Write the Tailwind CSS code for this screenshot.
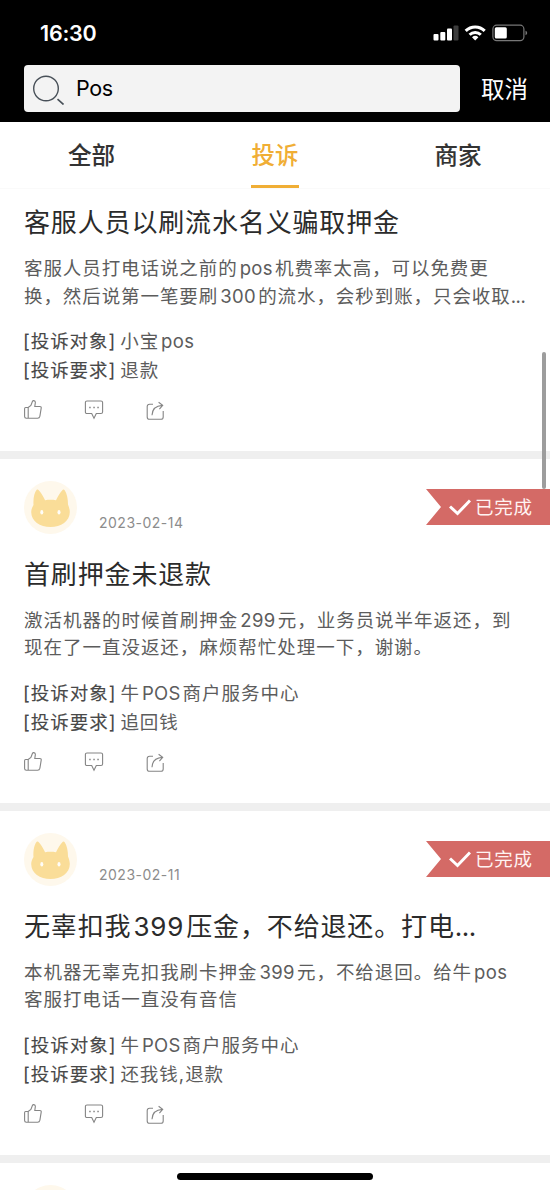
<!DOCTYPE html>
<html lang="zh-CN">
<head>
<meta charset="utf-8">
<title>投诉</title>
<script src="https://cdn.jsdelivr.net/npm/@tailwindcss/browser@4"></script>
</head>
<body class="bg-white">
<svg class="hidden">
  <symbol id="like" viewBox="0 0 18 20"><path d="M1.6 7.500h2.600l2.700-2.100 1.500-3.900c.3-.7.8-1 1.400-.9 1.200.2 1.700 1.100 1.500 2.300L10.800 6.500h5c1 0 1.600.7 1.400 1.700l-1.300 8c-.3 1.500-.9 2.100-2.300 2.100H2.300C1.200 18.300.6 17.700.6 16.600V8.700c0-.7.4-1.200 1-1.200zM4.200 7.500v10.800"/></symbol>
  <symbol id="chat" viewBox="0 0 20 20"><path d="M3 1h14c1 0 1.600.6 1.600 1.600v9.300c0 1-.6 1.600-1.600 1.600h-4.700L10 18.300l-2.300-4.800H3c-1 0-1.600-.6-1.600-1.600V2.600C1.400 1.600 2 1 3 1z"/><path stroke-width="1.700" d="M5.200 7.500h1.500M9.300 7.500h1.500M13.300 7.500h1.500"/></symbol>
  <symbol id="share" viewBox="0 0 20 20"><path d="M7 3.200H3.600C2 3.200 1.200 4 1.200 5.600v10.300c0 1.600.8 2.400 2.400 2.400h11.200c1.600 0 2.400-.8 2.400-2.400V10M6 14.300C6.200 8.500 9.500 4.800 16.500 4.400M12.600 1.300l4.100 3.100-3.300 3.700"/></symbol>
  <symbol id="cat" viewBox="0 0 53 53"><circle cx="26.500" cy="26.500" r="26.500" fill="#fef8ec"/><path fill="#fadd98" d="M9.500 24C9 17 10.500 11.500 12.500 9c.8-.8 1.700-.5 2.500.4 2.600 2.900 4.500 6.200 6.100 9.800 3.600-.6 7.300-.6 10.900 0 1.600-3.600 3.500-6.900 6.100-9.800.8-.9 1.800-1.100 2.600-.2 2.200 3.500 3.300 8.300 3.300 14.300 1 2.400 1.800 5 1.800 7.600C45.800 40.500 37 46 26.500 46S7.200 40.500 7.200 31.100c0-2.500.9-4.900 2.300-7.100z"/><ellipse cx="17.800" cy="31.300" rx="1.500" ry="2.300" fill="#fffdf8"/><ellipse cx="35" cy="31.300" rx="1.500" ry="2.300" fill="#fffdf8"/></symbol>
</svg>

<div class="relative w-[550px] h-[1190px] overflow-hidden bg-white font-['Inter','Noto_Sans_CJK_SC',sans-serif] whitespace-nowrap">
  <header class="h-[122px] bg-black text-white">
    <div class="h-[65px] flex items-center justify-between pl-[40px] pr-[22px]">
      <span class="text-[21.500px] font-semibold tracking-[-0.2px] leading-[30px]">16:30</span>
      <svg class="w-[96px] h-[20px]" viewBox="432 23 96 20">
        <g fill="#fff"><rect x="433.500" y="34" width="5" height="6.500" rx="1"/><rect x="440.300" y="32" width="5" height="8.500" rx="1"/><rect x="447" y="28.500" width="5" height="12" rx="1"/><rect x="453.500" y="25.500" width="5" height="15" rx="1" fill="#3c3c3c"/>
        <rect x="494.800" y="27.300" width="12" height="11.200" rx="1.500"/></g>
        <g fill="none" stroke="#fff" stroke-width="3"><path d="M465.700 30.900a13.400 13.400 0 0 1 19 0"/><path d="M469.600 34.800a8 8 0 0 1 11.200 0"/></g>
        <path fill="#fff" d="M475.200 40.600l-3.200-3.300a4.800 4.800 0 0 1 6.400 0z"/>
        <rect x="492.900" y="25.200" width="31" height="15.400" rx="3.800" fill="none" stroke="#777" stroke-width="1.200"/>
        <path fill="#777" d="M525.500 30.800c2.200.7 2.200 3.700 0 4.400z"/>
      </svg>
    </div>
    <div class="flex items-center pl-[24px]">
      <div class="flex h-[47px] w-[436px] items-center rounded-[4px] bg-[#f3f3f3] pl-[8px]">
        <svg class="h-[32px] w-[32px]" viewBox="0 0 32 32" fill="none" stroke="#485058" stroke-width="1.400"><circle cx="14" cy="15.500" r="12.300"/><path stroke-width="1.600" d="M25.500 26.200l6 5.300"/></svg>
        <span class="ml-[12px] mb-[2px] text-[21.500px] leading-[30px] tracking-[-0.4px] text-black">Pos</span>
      </div>
      <span class="ml-[21px] mt-[2px] text-[23.500px] leading-[34px]">取消</span>
    </div>
  </header>

  <nav class="flex h-[67px] border-b border-[#fafafa] text-[23.500px] leading-[34px] font-medium text-[#333]">
    <div class="flex w-[183px] flex-col items-center pt-[17px] [-webkit-text-stroke:0.1px]">全部</div>
    <div class="flex w-[184px] flex-col items-center pt-[17px] text-[#f0ae35]">投诉<span class="mt-[12px] h-[3px] w-[48px] bg-[#f0ae35]"></span></div>
    <div class="flex w-[182px] flex-col items-center pt-[17px] [-webkit-text-stroke:0.1px]">商家</div>
  </nav>

  <main>
    <article class="h-[270px] border-b-8 border-[#efefef] px-[24px] pt-[16px]">
      <h2 class="text-[26px] leading-[36px] tracking-[0.850px] text-[#2b2b2b]">客服人员以刷流水名义骗取押金</h2>
      <div class="mt-[14px] text-[18.500px] leading-[27.500px] tracking-[0.920px] text-[#5c5c5c]">
        <p>客服人员打电话说之前的<span class="mx-[2px] tracking-[0.4px]">pos</span>机费率太高，可以免费更</p>
        <p>换，然后说第一笔要刷<span class="mx-[2px] tracking-[0.4px]">300</span>的流水，会秒到账，只会收取<span class="tracking-[-0.4px]">...</span></p>
      </div>
      <div class="mt-[17px] text-[18.500px] leading-[28.500px] tracking-[0.950px] text-[#5c5c5c]">
        <p><span class="-ml-px mr-[4px] text-[#484848] [-webkit-text-stroke:0.1px]">[投诉对象]</span>小宝<span class="ml-[2px] tracking-[0.4px]">pos</span></p>
        <p><span class="-ml-px mr-[4px] text-[#484848] [-webkit-text-stroke:0.1px]">[投诉要求]</span>退款</p>
      </div>
      <div class="mt-[16px] flex fill-none stroke-[#858585] stroke-[1.1]">
        <svg class="h-[20px] w-[18px]"><use href="#like"/></svg>
        <svg class="ml-[42px] h-[20px] w-[20px]"><use href="#chat"/></svg>
        <svg class="ml-[42px] mt-px h-[20px] w-[20px]"><use href="#share"/></svg>
      </div>
    </article>

    <article class="h-[352px] border-b-8 border-[#efefef] pl-[24px] pt-[22px]">
      <div class="flex h-[53px]">
        <svg class="h-[53px] w-[53px]"><use href="#cat"/></svg>
        <time class="ml-[22px] mt-[32px] text-[14px] leading-[20px] tracking-[0.500px] text-[#8c8c8c]">2023-02-14</time>
        <div class="ml-auto mt-[8px] flex h-[36px] w-[124px] items-center bg-[#d46a66] pl-[23px] text-[18.500px] tracking-[0.800px] text-[#fff3f2] [clip-path:polygon(0_0,100%_0,100%_100%,0_100%,15px_50%)]">
          <svg class="mr-[4px] h-[18px] w-[22px]" viewBox="0 0 22 18" fill="none" stroke="#fff" stroke-width="3"><path d="M1 8.500l7.500 7L21 2.500"/></svg><span class="mt-px">已完成</span>
        </div>
      </div>
      <h2 class="mt-[23px] text-[26px] leading-[36px] tracking-[0.850px] text-[#2b2b2b]">首刷押金未退款</h2>
      <div class="mt-[14px] text-[18.500px] leading-[27px] tracking-[0.980px] text-[#5c5c5c]">
        <p>激活机器的时候首刷押金<span class="mx-[2px] tracking-[0.4px]">299</span>元，业务员说半年返还，到</p>
        <p>现在了一直没返还，麻烦帮忙处理一下，谢谢。</p>
      </div>
      <div class="mt-[18px] text-[18.500px] leading-[28.500px] tracking-[0.980px] text-[#5c5c5c]">
        <p><span class="-ml-px mr-[4px] text-[#484848] [-webkit-text-stroke:0.1px]">[投诉对象]</span>牛<span class="mx-[2px] tracking-[0.3px]">POS</span>商户服务中心</p>
        <p><span class="-ml-px mr-[4px] text-[#484848] [-webkit-text-stroke:0.1px]">[投诉要求]</span>追回钱</p>
      </div>
      <div class="mt-[16px] flex fill-none stroke-[#858585] stroke-[1.1]">
        <svg class="h-[20px] w-[18px]"><use href="#like"/></svg>
        <svg class="ml-[42px] h-[20px] w-[20px]"><use href="#chat"/></svg>
        <svg class="ml-[42px] mt-px h-[20px] w-[20px]"><use href="#share"/></svg>
      </div>
    </article>

    <article class="h-[352px] border-b-8 border-[#efefef] pl-[24px] pt-[22px]">
      <div class="flex h-[53px]">
        <svg class="h-[53px] w-[53px]"><use href="#cat"/></svg>
        <time class="ml-[22px] mt-[32px] text-[14px] leading-[20px] tracking-[0.500px] text-[#8c8c8c]">2023-02-11</time>
        <div class="ml-auto mt-[8px] flex h-[36px] w-[124px] items-center bg-[#d46a66] pl-[23px] text-[18.500px] tracking-[0.800px] text-[#fff3f2] [clip-path:polygon(0_0,100%_0,100%_100%,0_100%,15px_50%)]">
          <svg class="mr-[4px] h-[18px] w-[22px]" viewBox="0 0 22 18" fill="none" stroke="#fff" stroke-width="3"><path d="M1 8.500l7.500 7L21 2.500"/></svg><span class="mt-px">已完成</span>
        </div>
      </div>
      <h2 class="mt-[23px] text-[26px] leading-[36px] tracking-[0.850px] text-[#2b2b2b]">无辜扣我<span class="mx-[2px]">399</span>压金，不给退还。打电<span class="tracking-[-0.5px]">...</span></h2>
      <div class="mt-[14px] text-[18.500px] leading-[27px] tracking-[0.950px] text-[#5c5c5c]">
        <p>本机器无辜克扣我刷卡押金<span class="mx-[2px] tracking-[0.4px]">399</span>元，不给退回。给牛<span class="ml-[2px] tracking-[0.4px]">pos</span></p>
        <p>客服打电话一直没有音信</p>
      </div>
      <div class="mt-[18px] text-[18.500px] leading-[28.500px] tracking-[0.980px] text-[#5c5c5c]">
        <p><span class="-ml-px mr-[4px] text-[#484848] [-webkit-text-stroke:0.1px]">[投诉对象]</span>牛<span class="mx-[2px] tracking-[0.3px]">POS</span>商户服务中心</p>
        <p><span class="-ml-px mr-[4px] text-[#484848] [-webkit-text-stroke:0.1px]">[投诉要求]</span>还我钱,退款</p>
      </div>
      <div class="mt-[16px] flex fill-none stroke-[#858585] stroke-[1.1]">
        <svg class="h-[20px] w-[18px]"><use href="#like"/></svg>
        <svg class="ml-[42px] h-[20px] w-[20px]"><use href="#chat"/></svg>
        <svg class="ml-[42px] mt-px h-[20px] w-[20px]"><use href="#share"/></svg>
      </div>
    </article>

    <article class="pl-[24px] pt-[22px]">
      <svg class="h-[53px] w-[53px]"><use href="#cat"/></svg>
    </article>
  </main>

  <div class="absolute left-[542px] top-[352px] h-[137px] w-[4px] rounded-full bg-[#9d9d9d]"></div>
  <div class="absolute left-[177px] top-[1173px] h-[7px] w-[196px] rounded-full bg-black"></div>
</div>
</body>
</html>
